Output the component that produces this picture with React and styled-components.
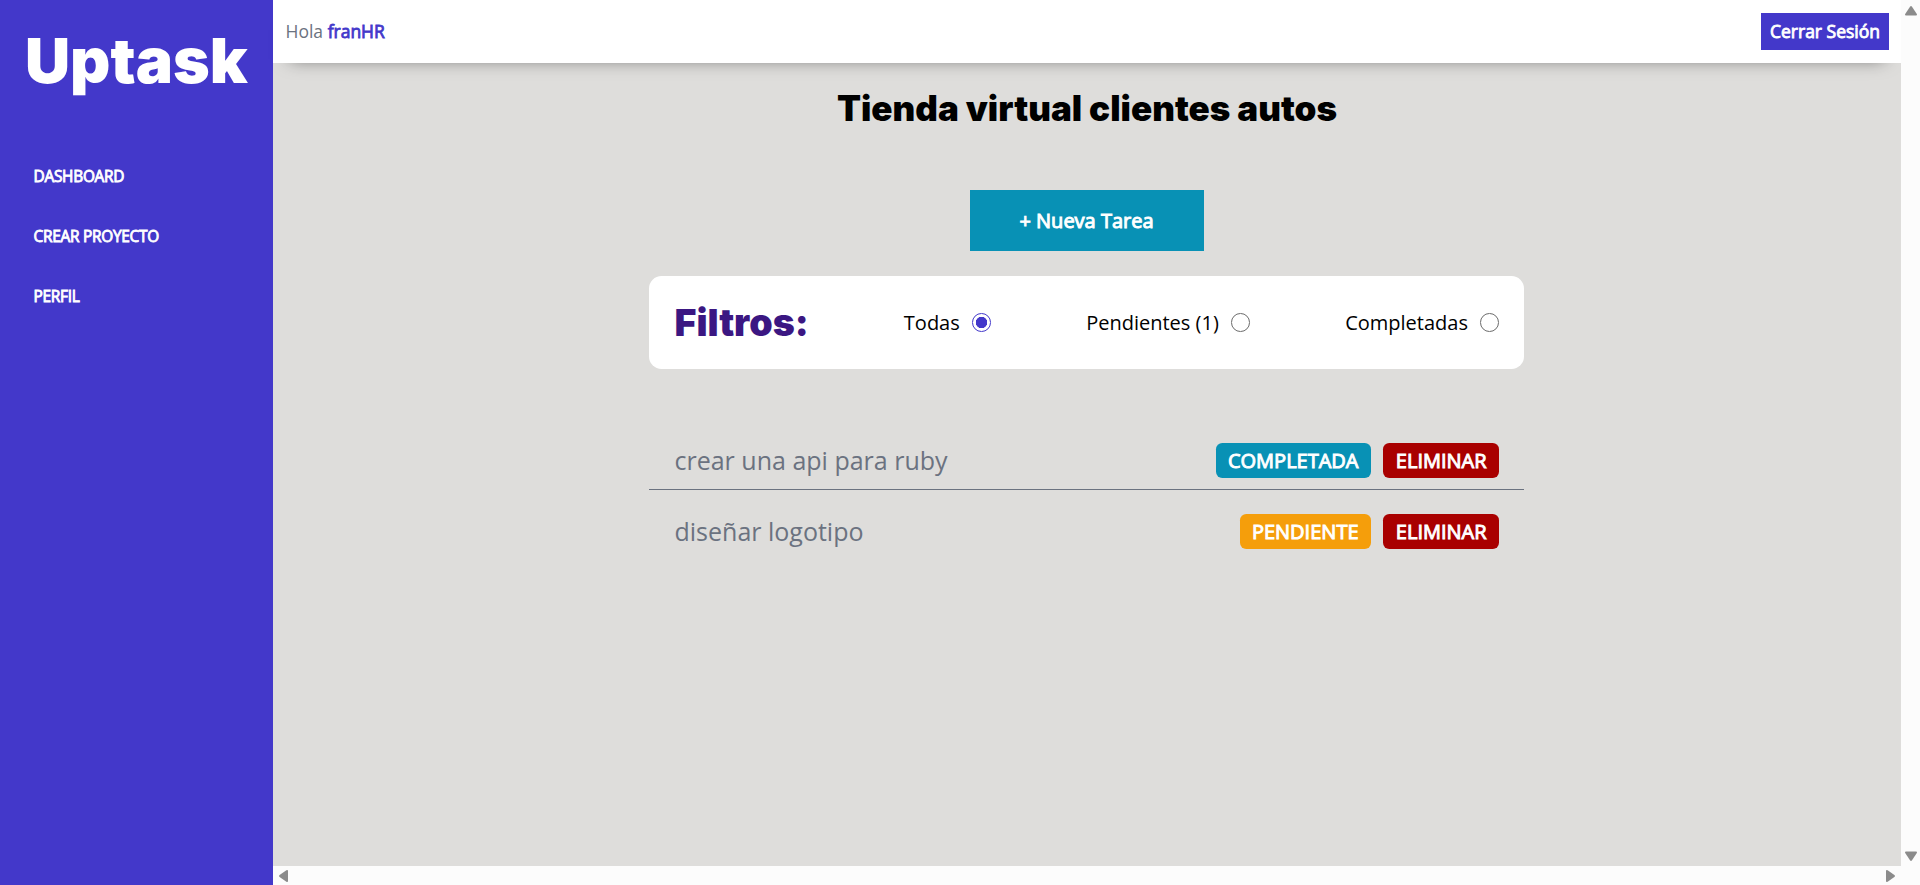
import React from 'react';
import styled, { createGlobalStyle } from 'styled-components';

const GlobalStyle = createGlobalStyle`
  *, *::before, *::after { box-sizing: border-box; }
  body {
    margin: 0;
    overflow: hidden;
    font-family: "Open Sans", sans-serif;
    font-size: 20px;
    line-height: 1;
    color: #000;
  }
  h1, h2, p, ul { margin: 0; padding: 0; }
  button, input { font: inherit; margin: 0; }
`;

const Layout = styled.div`
  display: grid;
  grid-template-columns: 273px 1fr 19px;
  grid-template-rows: 866px 19px;
  height: 885px;
`;

const Sidebar = styled.aside`
  grid-row: 1 / 3;
  background: #4338ca;
  color: #fff;
  padding: 22px 25px 0;
`;

const Logo = styled.h1`
  font: 900 62.5px/76px Inter, sans-serif;
  white-space: nowrap;
`;

const Menu = styled.nav`
  display: flex;
  flex-direction: column;
  gap: 40px;
  margin: 68.5px 8.5px 0;
`;

const MenuLink = styled.a`
  font-size: 15.4px;
  line-height: 20px;
  letter-spacing: -0.25px;
  text-transform: uppercase;
  color: #fff;
  -webkit-text-stroke: 0.055em currentColor;
`;

const Main = styled.main`
  background: #dedddb;
`;

const TopBar = styled.header`
  display: flex;
  justify-content: space-between;
  align-items: center;
  height: 63px;
  padding: 0 12px 0 12.5px;
  background: #fff;
  box-shadow: 0 13px 18px -17px rgba(0, 0, 0, 0.55);
`;

const Greeting = styled.p`
  padding-bottom: 1px;
  font-size: 17.5px;
  line-height: 24px;
  color: #6b7280;
`;

const UserName = styled.span`
  color: #4338ca;
  -webkit-text-stroke: 0.045em currentColor;
`;

const Button = styled.button`
  border: 0;
  color: #fff;
  white-space: nowrap;
  -webkit-text-stroke: 0.048em currentColor;
`;

const LogoutButton = styled(Button)`
  width: 128px;
  height: 37px;
  padding: 0;
  font-size: 17.5px;
  background: #4338ca;
`;

const Content = styled.section`
  display: flex;
  flex-direction: column;
  align-items: center;
  width: 876px;
  margin: 0 auto;
  padding: 24px 1px 0 0;
`;

const Title = styled.h2`
  padding-left: 1px;
  font: 900 35px/42px Inter, sans-serif;
  white-space: nowrap;
`;

const NewTaskButton = styled(Button)`
  width: 234px;
  height: 61px;
  margin-top: 61px;
  padding: 0;
  font-size: 20px;
  background: #0891b5;
`;

const Filters = styled.div`
  display: flex;
  justify-content: space-between;
  align-items: center;
  width: 100%;
  height: 93px;
  margin-top: 25px;
  padding: 0 24.75px 0 25.5px;
  border-radius: 12.5px;
  background: #fff;
`;

const FiltersTitle = styled.p`
  font: 900 37.5px/45px Inter, sans-serif;
  color: #3b1782;
`;

const FilterLabel = styled.label`
  display: flex;
  align-items: center;
  gap: 12.5px;
  line-height: 27px;
`;

const Radio = styled.input`
  appearance: none;
  width: 18.75px;
  height: 18.75px;
  border: 1.25px solid #6c6c6c;
  border-radius: 50%;
  background: #fff;
  &:checked {
    border-color: #4338ca;
    background: radial-gradient(circle, #4338ca 5.4px, #fff 6px);
  }
`;

const TaskList = styled.ul`
  width: 100%;
  margin-top: 50px;
  list-style: none;
`;

const Task = styled.li`
  display: flex;
  justify-content: space-between;
  align-items: center;
  height: 71px;
  padding: 24px 25px 11px 25.5px;
  border-bottom: 1px solid #6b7280;
  &:last-child { border-bottom-color: transparent; }
`;

const TaskName = styled.p`
  font-size: 25px;
  line-height: 35px;
  color: #6b7280;
`;

const Actions = styled.div`
  display: flex;
  gap: 12.5px;
`;

const Pill = styled(Button)`
  height: 35px;
  padding: 0 12.42px;
  border-radius: 6.25px;
  text-transform: uppercase;
  background: ${({ $tone }) => ({ done: '#0891b5', pending: '#f59e0b', danger: '#a90000' })[$tone]};
`;

const VerticalTrack = styled.div`
  display: flex;
  flex-direction: column;
  justify-content: space-between;
  align-items: center;
  padding: 6px 0 5px;
  background: #fcfcfc;
`;

const HorizontalTrack = styled.div`
  grid-column: 2 / 4;
  display: flex;
  justify-content: space-between;
  align-items: center;
  padding: 1px 25px 0 6px;
  background: #fcfcfc;
`;

const ArrowIcon = styled.svg`
  display: block;
  fill: #8b8b8b;
`;

const arrowShapes = {
  up: [12, 10, 'M5 .7Q6 -.6 7 .7L11.8 8Q12.4 9.5 11 9.5H1Q-.4 9.5 .2 8Z'],
  down: [12, 10, 'M5 9.3Q6 10.6 7 9.3L11.8 2Q12.4 .5 11 .5H1Q-.4 .5 .2 2Z'],
  left: [9, 12, 'M.6 5Q-.5 6 .6 7L7.4 11.8Q9 12.4 9 11V1Q9 -.4 7.4 .2Z'],
  right: [9, 12, 'M8.4 5Q9.5 6 8.4 7L1.6 11.8Q0 12.4 0 11V1Q0 -.4 1.6 .2Z'],
};

function Arrow({ direction }) {
  const [width, height, d] = arrowShapes[direction];
  return (
    <ArrowIcon width={width} height={height} viewBox={`0 0 ${width} ${height}`} aria-hidden="true">
      <path d={d} />
    </ArrowIcon>
  );
}

const links = ['Dashboard', 'Crear Proyecto', 'Perfil'];
const filters = ['Todas', 'Pendientes (1)', 'Completadas'];
const tasks = [
  { name: 'crear una api para ruby', state: 'Completada', tone: 'done' },
  { name: 'diseñar logotipo', state: 'Pendiente', tone: 'pending' },
];

export default function App() {
  return (
    <Layout>
      <GlobalStyle />
      <Sidebar>
        <Logo>Uptask</Logo>
        <Menu>
          {links.map((link) => <MenuLink key={link}>{link}</MenuLink>)}
        </Menu>
      </Sidebar>
      <Main>
        <TopBar>
          <Greeting>Hola <UserName>franHR</UserName></Greeting>
          <LogoutButton>Cerrar Sesión</LogoutButton>
        </TopBar>
        <Content>
          <Title>Tienda virtual clientes autos</Title>
          <NewTaskButton>+ Nueva Tarea</NewTaskButton>
          <Filters>
            <FiltersTitle>Filtros:</FiltersTitle>
            {filters.map((filter, index) => (
              <FilterLabel key={filter}>
                {filter}
                <Radio type="radio" name="filter" defaultChecked={index === 0} />
              </FilterLabel>
            ))}
          </Filters>
          <TaskList>
            {tasks.map((task) => (
              <Task key={task.name}>
                <TaskName>{task.name}</TaskName>
                <Actions>
                  <Pill $tone={task.tone}>{task.state}</Pill>
                  <Pill $tone="danger">Eliminar</Pill>
                </Actions>
              </Task>
            ))}
          </TaskList>
        </Content>
      </Main>
      <VerticalTrack>
        <Arrow direction="up" />
        <Arrow direction="down" />
      </VerticalTrack>
      <HorizontalTrack>
        <Arrow direction="left" />
        <Arrow direction="right" />
      </HorizontalTrack>
    </Layout>
  );
}
